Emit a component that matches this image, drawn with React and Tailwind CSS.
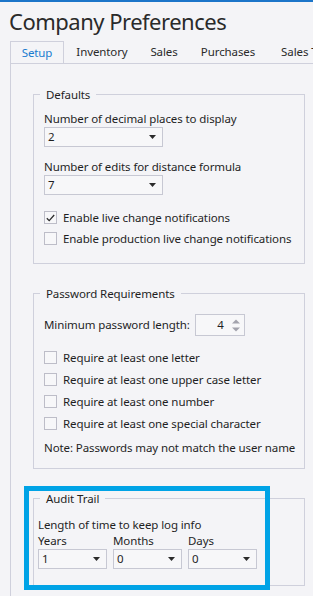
import React from "react";

const font = { fontFamily: '"Noto Sans", "Open Sans", sans-serif' };

const Arrow = () => (
  <svg width="7" height="4" viewBox="0 0 7 4" className="shrink-0">
    <polygon points="0,0 7,0 3.5,4" fill="#2b2b2b" />
  </svg>
);

const Select = ({ value, className = "" }) => (
  <div
    className={`h-[20px] flex items-center justify-between border border-[#c7c8d3] bg-[#f7f7f9] pl-[3px] pr-[6px] text-[#1f1f1f] ${className}`}
  >
    <span>{value}</span>
    <Arrow />
  </div>
);

const Check = ({ checked, label, className = "" }) => (
  <div className={`flex items-center h-[17px] ${className}`}>
    <div className="w-[13px] h-[13px] border border-[#bdbdc8] bg-[#f7f7f9] flex items-center justify-center shrink-0">
      {checked && (
        <svg width="9" height="8" viewBox="0 0 9 8">
          <polyline points="0.8,4.2 3.2,6.6 8.2,1" fill="none" stroke="#2b2b2b" strokeWidth="1.3" />
        </svg>
      )}
    </div>
    <span className="ml-[6px] whitespace-nowrap">{label}</span>
  </div>
);

const Group = ({ title, children, className = "" }) => (
  <fieldset className={`border border-[#cfd0dc] pl-[10px] ${className}`}>
    <legend className="-ml-[4px] px-[6px] leading-[17px] text-[#1f1f1f]">{title}</legend>
    {children}
  </fieldset>
);

export default function App() {
  const tabs = [
    { name: "Setup", w: "w-[54px]" },
    { name: "Inventory", w: "w-[76px]" },
    { name: "Sales", w: "w-[48px]" },
    { name: "Purchases", w: "w-[80px]" },
    { name: "Sales Tax", w: "w-[74px]" },
  ];

  return (
    <div
      style={font}
      className="relative w-[313px] h-[596px] overflow-hidden bg-[#f4f4f7] text-[11.5px] tracking-[-0.1px] text-[#1f1f1f]"
    >
      <div className="h-[2px] bg-[#1c75c9]" />

      <h1 className="mt-[4px] mb-[5px] ml-[9px] text-[22px] tracking-[-0.5px] leading-[30px] font-normal text-[#2a2a2a] whitespace-nowrap">
        Company Preferences
      </h1>

      {/* tabs */}
      <div className="flex ml-[10px] h-[22px] items-stretch overflow-hidden">
        {tabs.map((t, i) =>
          i === 0 ? (
            <div
              key={t.name}
              className={`relative z-10 ${t.w} h-[23px] shrink-0 flex items-center justify-center border-t border-l border-r border-[#cfd0dc] bg-[#f4f4f7] text-[#1a7ccf]`}
            >
              {t.name}
            </div>
          ) : (
            <div
              key={t.name}
              className={`${t.w} shrink-0 flex items-center justify-center text-[#2a2a2a] whitespace-nowrap`}
            >
              {t.name}
            </div>
          )
        )}
      </div>

      {/* tab panel */}
      <div className="ml-[10px] border-l border-t border-[#cfd0dc] pl-[22px] pr-[8px] pt-[22px] h-[600px]">
        <Group title="Defaults" className="pb-[16px]">
          <div className="pt-[7px] leading-[17px]">Number of decimal places to display</div>
          <Select value="2" className="w-[119px]" />
          <div className="mt-[11px] leading-[17px]">Number of edits for distance formula</div>
          <Select value="7" className="w-[119px]" />
          <Check checked label="Enable live change notifications" className="mt-[14px]" />
          <Check label="Enable production live change notifications" className="mt-[4px]" />
        </Group>

        <Group title="Password Requirements" className="mt-[21px] pb-[12px]">
          <div className="mt-[12px] flex items-center h-[22px]">
            <span className="whitespace-nowrap">Minimum password length:</span>
            <div className="ml-[5px] w-[50px] h-[22px] border border-[#c7c8d3] bg-[#f7f7f9] flex items-center justify-end pr-[4px]">
              <span className="mr-[8px]">4</span>
              <svg width="8" height="13" viewBox="0 0 8 13">
                <polygon points="0,4.5 8,4.5 4,0.5" fill="#a3a3ad" />
                <polygon points="0,8.5 8,8.5 4,12.5" fill="#a3a3ad" />
              </svg>
            </div>
          </div>
          <Check label="Require at least one letter" className="mt-[13px]" />
          <Check label="Require at least one upper case letter" className="mt-[5px]" />
          <Check label="Require at least one number" className="mt-[5px]" />
          <Check label="Require at least one special character" className="mt-[5px]" />
          <div className="mt-[7px] leading-[17px] whitespace-nowrap">Note: Passwords may not match the user name</div>
        </Group>

        <fieldset className="mt-[21px] border border-[#cfd0dc] pl-[4px] pb-[16px]">
          <legend className="ml-[2px] px-[6px] leading-[17px]">Audit Trail</legend>
          <div className="mt-[10px] leading-[16px]">Length of time to keep log info</div>
          <div className="flex gap-[6px]">
            {[
              ["Years", "1"],
              ["Months", "0"],
              ["Days", "0"],
            ].map(([label, v]) => (
              <div key={label} className="w-[69px]">
                <div className="leading-[16px]">{label}</div>
                <Select value={v} className="w-[69px]" />
              </div>
            ))}
          </div>
        </fieldset>
      </div>

      {/* highlight annotation */}
      <div className="absolute left-[24px] top-[486px] w-[246px] h-[104px] border-[5px] border-[#00a3e6]" />
    </div>
  );
}
